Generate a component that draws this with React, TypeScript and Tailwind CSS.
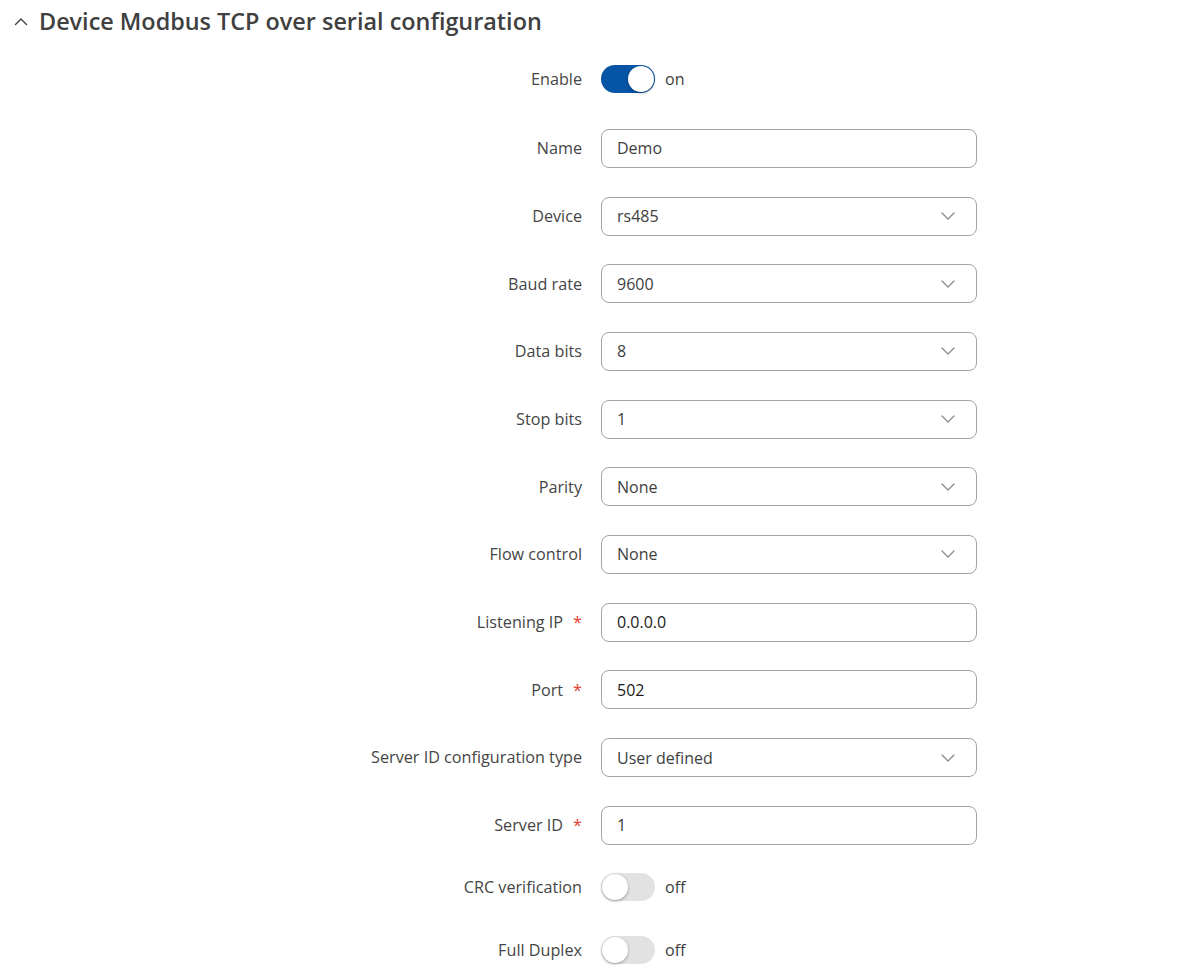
import React from "react";

const font = { fontFamily: '"Open Sans", "Noto Sans", sans-serif' };

function Chevron() {
  return (
    <svg width="14" height="8" viewBox="0 0 14 8" fill="none" className="absolute right-[21px] top-1/2 -translate-y-1/2">
      <polyline points="1,1 7,7 13,1" stroke="#8a8a8a" strokeWidth="1.3" strokeLinecap="round" strokeLinejoin="round" />
    </svg>
  );
}

function Label({ text, required }: { text: string; required?: boolean }) {
  return (
    <div className="w-[582px] shrink-0 text-right text-[16.2px] text-[#454545] leading-none">
      {text}
      {required && <span className="ml-[10px] text-[#e0412e]">*</span>}
    </div>
  );
}

function InputRow({ label, value, required, select, mt = "mt-[29.7px]", dark }: { label: string; value: string; required?: boolean; select?: boolean; mt?: string; dark?: boolean }) {
  return (
    <div className={`flex items-center h-[38px] ${mt}`}>
      <Label text={label} required={required} />
      <div className="relative ml-[19px] w-[376px] h-[39px] rounded-[8px] border border-[#a3a3ab] bg-white flex items-center pl-[15px]">
        <span className={`text-[16px] ${dark ? "text-[#1a1a1a]" : "text-[#404040]"}`}>{value}</span>
        {select && <Chevron />}
      </div>
    </div>
  );
}

function Toggle({ label, on, mt }: { label: string; on: boolean; mt: string }) {
  return (
    <div className={`flex items-center h-[28px] ${mt}`}>
      <Label text={label} />
      <div className="ml-[19px] flex items-center">
        <div className={`relative w-[54px] h-[28px] rounded-full ${on ? "bg-[#0654a6]" : "bg-[#e2e2e2]"}`}>
          <div
            className={`absolute top-[1px] w-[26px] h-[26px] rounded-full bg-white shadow-[0_1px_3px_rgba(0,0,0,0.35)] ${on ? "right-[1px]" : "left-[1px]"}`}
          />
        </div>
        <span className="ml-[10px] text-[16px] text-[#404040]">{on ? "on" : "off"}</span>
      </div>
    </div>
  );
}

export default function App() {
  return (
    <div className="w-[1197px] h-[965px] bg-white overflow-hidden" style={font}>
      <div className="flex items-center h-[43px]">
        <svg width="14" height="9" viewBox="0 0 14 9" fill="none" className="ml-[14px]">
          <polyline points="1.5,7.5 7,2 12.5,7.5" stroke="#404040" strokeWidth="1.4" strokeLinecap="round" strokeLinejoin="round" />
        </svg>
        <h2 className="ml-[11px] text-[23.4px] font-semibold text-[#404040]">Device Modbus TCP over serial configuration</h2>
      </div>
      <Toggle label="Enable" on mt="mt-[22px]" />
      <InputRow label="Name" value="Demo" mt="mt-[36px]" />
      <InputRow label="Device" value="rs485" select mt="mt-[30px]" />
      <InputRow label="Baud rate" value="9600" select />
      <InputRow label="Data bits" value="8" select />
      <InputRow label="Stop bits" value="1" select />
      <InputRow label="Parity" value="None" select />
      <InputRow label="Flow control" value="None" select />
      <InputRow label="Listening IP" value="0.0.0.0" required dark />
      <InputRow label="Port" value="502" required dark />
      <InputRow label="Server ID configuration type" value="User defined" select />
      <InputRow label="Server ID" value="1" required />
      <Toggle label="CRC verification" on={false} mt="mt-[29px]" />
      <Toggle label="Full Duplex" on={false} mt="mt-[35px]" />
    </div>
  );
}
